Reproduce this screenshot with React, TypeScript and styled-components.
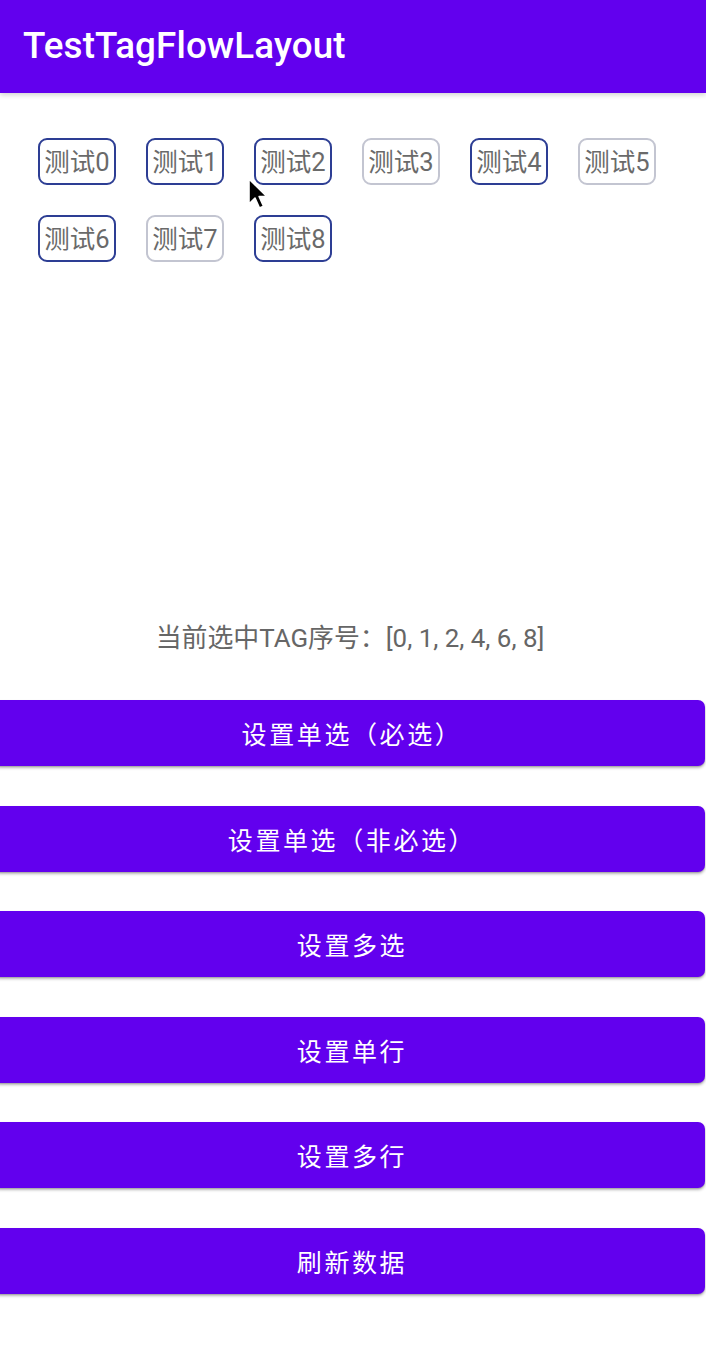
import React from "react";
import styled, { createGlobalStyle } from "styled-components";

const GlobalStyle = createGlobalStyle`
  html, body {
    margin: 0;
    padding: 0;
    background: #ffffff;
  }
  body {
    font-family: Roboto, "Noto Sans CJK SC", sans-serif;
    overflow: hidden;
  }
`;

const Screen = styled.div`
  position: relative;
  width: 706px;
  height: 1354px;
  background: #ffffff;
  overflow: hidden;
`;

const AppBar = styled.header`
  position: relative;
  z-index: 2;
  height: 93px;
  background: #6200ee;
  display: flex;
  align-items: center;
  padding-left: 23px;
  box-shadow: 0 2px 5px rgba(0, 0, 0, 0.18);
`;

const Title = styled.h1`
  margin: 0;
  margin-top: -2px;
  color: #ffffff;
  font-family: Roboto, sans-serif;
  font-weight: 500;
  font-size: 36.8px;
  letter-spacing: 0.1px;
`;

const TagPanel = styled.section`
  height: 528px;
  box-sizing: border-box;
  padding: 45px 30px 0 38px;
`;

const Flow = styled.div`
  display: flex;
  flex-wrap: wrap;
  gap: 30px;
`;

const Tag = styled.div<{ $selected: boolean }>`
  box-sizing: border-box;
  width: 78px;
  height: 47px;
  padding-top: 2px;
  border: 2px solid ${(p) => (p.$selected ? "#2d3e94" : "#c3c5d1")};
  border-radius: 9px;
  display: flex;
  align-items: center;
  justify-content: center;
  color: #6a6a6a;
  font-family: Roboto, "Noto Sans CJK SC", sans-serif;
  font-size: 25.5px;
  line-height: 1;
  white-space: nowrap;
  background: #ffffff;
`;

const Status = styled.p`
  margin: 0;
  height: 34px;
  line-height: 34px;
  text-align: center;
  color: #666666;
  font-family: Roboto, "Noto Sans CJK SC", sans-serif;
  font-size: 25.9px;
  padding-right: 6px;
`;

const ButtonList = styled.div`
  margin-top: 45px;
  display: flex;
  flex-direction: column;
  gap: 39.5px;
`;

const ActionButton = styled.button`
  margin-left: -7px;
  width: 712px;
  height: 66px;
  border: none;
  border-radius: 7px;
  background: #6200ee;
  color: #ffffff;
  font-family: Roboto, "Noto Sans CJK SC", sans-serif;
  font-size: 25px;
  letter-spacing: 2.6px;
  padding: 0;
  padding-left: 6px;
  box-shadow: 0 2px 3px rgba(0, 0, 0, 0.28), 0 1px 1px rgba(0, 0, 0, 0.12);
  cursor: pointer;
`;

const Cursor = styled.svg`
  position: absolute;
  left: 247px;
  top: 177px;
  width: 22px;
  height: 34px;
  pointer-events: none;
`;

const tags = Array.from({ length: 9 }, (_, i) => `测试${i}`);
const selected = [0, 1, 2, 4, 6, 8];
const buttons = [
  "设置单选（必选）",
  "设置单选（非必选）",
  "设置多选",
  "设置单行",
  "设置多行",
  "刷新数据",
];

export default function App() {
  return (
    <Screen>
      <GlobalStyle />
      <AppBar>
        <Title>TestTagFlowLayout</Title>
      </AppBar>
      <TagPanel>
        <Flow>
          {tags.map((t, i) => (
            <Tag key={t} $selected={selected.includes(i)}>
              {t}
            </Tag>
          ))}
        </Flow>
      </TagPanel>
      <Status>当前选中TAG序号：[{selected.join(", ")}]</Status>
      <ButtonList>
        {buttons.map((b) => (
          <ActionButton key={b}>{b}</ActionButton>
        ))}
      </ButtonList>
      <Cursor viewBox="0 0 22 34">
        <path
          d="M2 2 L2 27 L8 21 L12.5 31 L16.5 29.3 L12.2 19.6 L20 19.6 Z"
          fill="#000000"
          stroke="#ffffff"
          strokeWidth="1.6"
          strokeLinejoin="round"
        />
      </Cursor>
    </Screen>
  );
}
